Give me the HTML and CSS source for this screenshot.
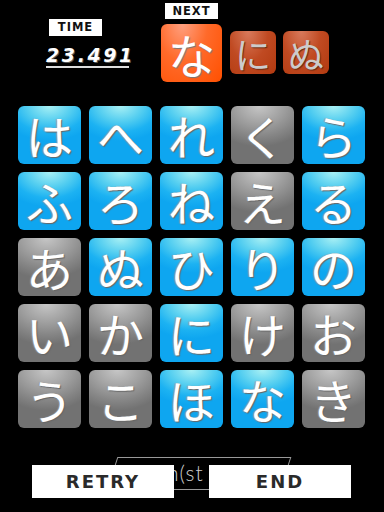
FILE: index.html
```html
<!DOCTYPE html>
<html lang="ja">
<head>
	<meta charset="UTF-8">
	<title>ひらがなタッチ</title>
	<link rel="stylesheet" href="styles.css">
</head>
<body>
<div class="game">
	<div class="top">
		<div class="time">
			<span class="label">TIME</span>
			<span class="clock">23.491</span>
		</div>
		<div class="next">
			<span class="label">NEXT</span>
			<div class="queue">
				<span class="card big">な</span>
				<span class="card small">に</span>
				<span class="card small">ぬ</span>
			</div>
		</div>
	</div>

	<div id="board" class="board">
		<span class="cell blue">は</span>
		<span class="cell blue">へ</span>
		<span class="cell blue">れ</span>
		<span class="cell gray">く</span>
		<span class="cell blue">ら</span>
		<span class="cell blue">ふ</span>
		<span class="cell blue">ろ</span>
		<span class="cell blue">ね</span>
		<span class="cell gray">え</span>
		<span class="cell blue">る</span>
		<span class="cell gray">あ</span>
		<span class="cell blue">ぬ</span>
		<span class="cell blue">ひ</span>
		<span class="cell blue">り</span>
		<span class="cell blue">の</span>
		<span class="cell gray">い</span>
		<span class="cell gray">か</span>
		<span class="cell blue">に</span>
		<span class="cell gray">け</span>
		<span class="cell gray">お</span>
		<span class="cell gray">う</span>
		<span class="cell gray">こ</span>
		<span class="cell blue">ほ</span>
		<span class="cell blue">な</span>
		<span class="cell gray">き</span>
	</div>

	<div class="bottom">
		<div class="hint"><span>n(st</span></div>
		<a href="javascript:;" class="btn">RETRY</a>
		<a href="javascript:;" class="btn">END</a>
	</div>
</div>
</body>
</html>
```

FILE: styles.css
```css
body{
	margin:0;
	padding:0;
	background:#000;
	font-family:"Noto Sans CJK JP","Noto Sans",sans-serif;
}
.game{
	width:384px;
	height:512px;
	overflow:hidden;
}
/* 上部：タイムとNEXT */
.top{
	display:flex;
	height:106px;
	padding-left:46px;
	gap:31px;
}
.label{
	display:block;
	background:#fff;
	color:#111;
	width:53px;
	height:16px;
	line-height:17px;
	text-align:center;
	font-family:"DejaVu Sans",sans-serif;
	font-weight:bold;
	font-size:11.5px;
	letter-spacing:1px;
}
.time{
	width:84px;
	margin-top:19px;
}
.time .label{
	height:17px;
	margin-left:3px;
}
.clock{
	display:block;
	margin-top:8px;
	width:83px;
	color:#fff;
	font-family:"DejaVu Sans",sans-serif;
	font-style:italic;
	font-weight:bold;
	font-size:19px;
	letter-spacing:2.6px;
	line-height:22px;
	border-bottom:2px solid #ddd;
	text-shadow:1px 1px 0 #555;
}
.next{
	margin-top:3px;
}
.next .label{
	margin-left:4px;
}
.queue{
	display:flex;
	align-items:flex-start;
	gap:8px;
	margin-top:5px;
}
.card{
	display:flex;
	align-items:center;
	justify-content:center;
	border-radius:6px;
	color:#fff;
	text-shadow:1px 1px 1px #777;
}
.card.big{
	width:61px;
	height:58px;
	font-size:47px;
	background:radial-gradient(ellipse at 35% 0%,#ffa080 0%,#ff6a2a 45%,#ff5000 100%);
}
.card.small{
	width:46px;
	height:43px;
	margin-top:7px;
	font-size:36px;
	color:#ccc;
	background:radial-gradient(ellipse at 40% 0%,#d87a5c 0%,#c04a22 50%,#b23a10 100%);
	text-shadow:1px 1px 1px #6a2a10;
}
.card.small + .card.small{
	margin-left:-1px;
}
/* 盤面 */
.board{
	display:grid;
	grid-template-columns:repeat(5,63px);
	grid-auto-rows:58px;
	gap:8px 8px;
	padding-left:18px;
}
.cell{
	display:flex;
	align-items:center;
	justify-content:center;
	border-radius:6px;
	color:#fff;
	font-size:47px;
	line-height:1;
	padding-bottom:2px;
	box-sizing:border-box;
	text-shadow:1px 1px 1px #666,-1px 0 1px #999;
}
.cell.blue{
	background:radial-gradient(ellipse 80% 60% at 50% 0%,#a8f0f4 0%,#52cdf0 45%,#1cb2f2 75%,#0ea6f0 100%);
}
.cell.gray{
	background:radial-gradient(ellipse 85% 70% at 45% 0%,#c6c6c6 0%,#a0a0a0 45%,#868686 75%,#727272 100%);
}
/* 下部ボタン */
.bottom{
	position:relative;
	display:flex;
	gap:35px;
	padding:37px 0 0 32px;
}
.hint{
	position:absolute;
	left:110px;
	top:29px;
	width:176px;
	height:33px;
}
.hint:before{
	content:"";
	position:absolute;
	left:2px;
	top:0;
	right:0;
	bottom:0;
	border:1px solid #999;
	transform:skewX(-18deg);
}
.hint span{
	position:absolute;
	left:57px;
	top:3px;
	color:#ccc;
	font-family:Lato,"Open Sans",sans-serif;
	font-weight:300;
	font-size:21px;
	letter-spacing:1px;
}
.btn{
	position:relative;
	display:block;
	width:142px;
	height:33px;
	line-height:34px;
	background:#fff;
	color:#2a2a2a;
	text-align:center;
	text-decoration:none;
	font-family:"DejaVu Sans",sans-serif;
	font-weight:bold;
	font-size:18px;
	letter-spacing:2px;
}
```
